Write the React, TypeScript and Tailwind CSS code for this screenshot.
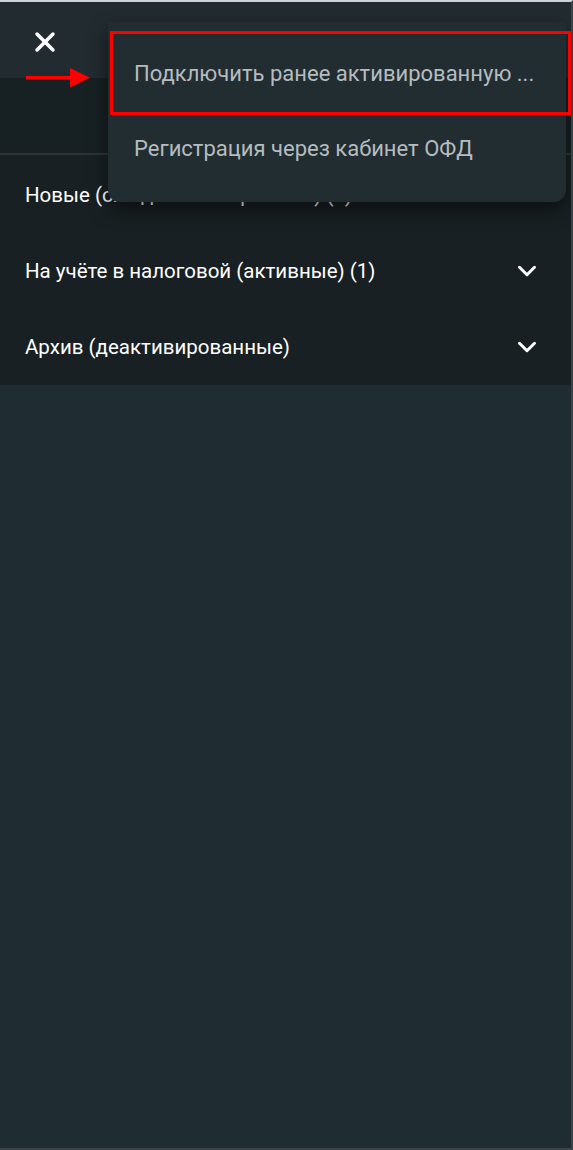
import {ChevronDown, X} from "lucide-react";

const groups = [
    "Новые (ожидают завершения) (3)",
    "На учёте в налоговой (активные) (1)",
    "Архив (деактивированные)",
];

export default function App() {
    return (
      <div className="relative w-[573px] h-[1150px] overflow-hidden bg-[#1f2d32] border-t-2 border-t-[#cfd3d5] border-r-2 border-r-[#3a4448] border-b-2 border-b-[#3b4549] font-['Roboto',sans-serif]">
          <div className="h-[76px] bg-[#222b30] flex items-start pl-[29px] pt-[24px]">
              <X className="text-white" size={32} strokeWidth={2.6}/>
          </div>
          <div className="h-[77px] bg-[#172023] border-b-2 border-b-[#2c363a]"/>
          <div className="bg-[#182023] pt-[2px]">
              {groups.map((g) => (
                <div key={g} className="h-[76px] flex items-center justify-between pl-[25px] pr-[29px]">
                    <span className="text-white text-[20.5px] leading-none">{g}</span>
                    <ChevronDown className="text-white" size={30} strokeWidth={2.4}/>
                </div>
              ))}
          </div>

          <div className="absolute left-[108px] top-[20px] w-[458px] h-[180px] bg-[#222d31] rounded-b-[12px] shadow-[0_8px_18px_rgba(0,0,0,0.5)] flex flex-col">
              <div className="h-[94px] flex items-center pl-[26px] pt-[8px] text-[22px] text-[#b5bcc0]">
                  Подключить ранее активированную ...
              </div>
              <div className="h-[64px] flex items-center pl-[26px] text-[22px] text-[#b5bcc0]">
                  Регистрация через кабинет ОФД
              </div>
          </div>

          <div className="absolute left-[110px] top-[29px] w-[461px] h-[84px] border-[3px] border-[#ff0000]"/>

          <svg className="absolute left-[26px] top-[64px]" width="66" height="24" viewBox="0 0 66 24">
              <rect x="0" y="10" width="46" height="3.5" fill="#ff0000"/>
              <polygon points="44,2 64,11.75 44,21.5" fill="#ff0000"/>
          </svg>
      </div>
    )
}
